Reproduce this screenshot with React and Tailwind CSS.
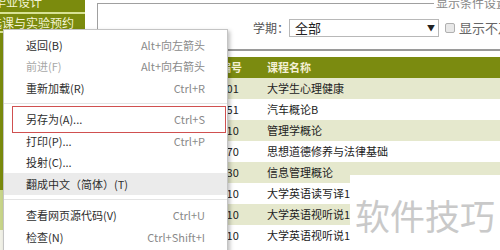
import React from "react";

const rows = [
  ["1", "0810001", "大学生心理健康"],
  ["2", "0820051", "汽车概论B"],
  ["3", "0830010", "管理学概论"],
  ["4", "0840070", "思想道德修养与法律基础"],
  ["5", "0850030", "信息管理概论"],
  ["6", "0860010", "大学英语读写译1"],
  ["7", "0870010", "大学英语视听说1"],
  ["8", "0880010", "大学英语视听说1"],
];

const menuTop = [
  { label: "返回(B)", key: "Alt+向左箭头" },
  { label: "前进(F)", key: "Alt+向右箭头", disabled: true },
  { label: "重新加载(R)", key: "Ctrl+R" },
];

const menuMid = [
  { label: "另存为(A)...", key: "Ctrl+S" },
  { label: "打印(P)...", key: "Ctrl+P" },
  { label: "投射(C)..." },
  { label: "翻成中文（简体）(T)", hover: true },
];

const menuBottom = [
  { label: "查看网页源代码(V)", key: "Ctrl+U" },
  { label: "检查(N)", key: "Ctrl+Shift+I" },
];

function MenuItem({ item }) {
  return (
    <div
      className={`flex items-center justify-between h-[21.5px] pl-[22px] pr-[22px] ${
        item.hover ? "bg-[#ebebeb]" : ""
      }`}
    >
      <span className={item.disabled ? "text-[#a8a8a8]" : "text-[#2e2e2e]"}>{item.label}</span>
      {item.key && <span className="text-[#8a8a8a]">{item.key}</span>}
    </div>
  );
}

export default function App() {
  return (
    <div
      className="relative w-[500px] h-[250px] overflow-hidden bg-white flex text-[11px]"
      style={{ fontFamily: '"Noto Sans CJK SC", "Noto Sans", sans-serif' }}
    >
      {/* Sidebar */}
      <div className="w-[85px] shrink-0 flex flex-col -mt-[8px] text-[12px]">
        <div className="h-[20px] bg-[#7b8b0d] text-[#f4f4d4] flex items-center -ml-[6px] whitespace-nowrap">毕业设计</div>
        <div className="h-[2px] bg-[#d8e294]" />
        <div className="h-[17px] bg-[#7b8b0d] text-[#f4f4d4] flex items-center -ml-[10px] whitespace-nowrap">选课与实验预约</div>
        <div className="h-[2px] bg-[#d8e294]" />
        <div className="h-[157px] bg-[#7b8b0d]" />
        <div className="h-[40px] bg-[#c9d68a]" />
        <div className="flex-1 bg-[#f2f2e8]" />
      </div>

      {/* Main */}
      <div className="flex-1 pl-[12px] flex flex-col">
        <div className="relative mt-[3px] h-[46px] border-l border-t border-[#a0a0a0] -mr-[10px] text-[12px]">
          <span className="absolute -top-[10px] left-[336px] bg-white px-[2px] text-[#888] whitespace-nowrap">显示条件设置</span>
          <div className="flex items-center mt-[14px] ml-[155px] whitespace-nowrap">
            <span className="text-[#555]">学期：</span>
            <div className="w-[150px] h-[18px] border border-[#b8b8b8] flex items-center justify-between pl-[5px] pr-[3px]">
              <span className="text-[13px] text-[#222]">全部</span>
              <span className="text-[8px] text-[#222]">▼</span>
            </div>
            <span className="ml-[6px] w-[10px] h-[10px] border border-[#b0b0b0] bg-[#e8e8e8] rounded-[2px]" />
            <span className="ml-[4px] text-[13px] text-[#666]">显示不及格</span>
          </div>
        </div>
        <div className="h-[2px] bg-[#9a9a9a] -mr-[10px]" />

        <div className="mt-[6px] -mr-[10px]">
          <div className="flex h-[21px] bg-[#7b8b10] text-[#f4f0d4] font-bold items-center">
            <div className="w-[93px] pl-[8px]">序号</div>
            <div className="w-[67px] pl-[8px] whitespace-nowrap">课程编号</div>
            <div className="flex-1 pl-[10px]">课程名称</div>
          </div>
          {rows.map((r, i) => (
            <div
              key={i}
              className={`flex h-[21px] items-center text-[#222] ${i % 2 === 0 ? "bg-[#e5e8cd]" : "bg-white"}`}
            >
              <div className="w-[93px] pl-[8px]">{r[0]}</div>
              <div className="w-[67px] pl-[6px] whitespace-nowrap">{r[1]}</div>
              <div className="flex-1 pl-[10px] whitespace-nowrap">{r[2]}</div>
            </div>
          ))}
        </div>
      </div>

      {/* Watermark */}
      <div className="absolute left-[350px] top-[175px] w-[150px] h-[75px] bg-white flex items-center justify-center">
        <span className="text-[35px] text-[#c9c9c9] leading-none mt-[4px]">软件技巧</span>
      </div>

      {/* Context menu */}
      <div className="absolute left-[3px] top-[29px] w-[225px] bg-white border border-[#c4c4c4] shadow-[2px_2px_4px_rgba(0,0,0,0.25)] py-[4px]">
        {menuTop.map((m) => (
          <MenuItem key={m.label} item={m} />
        ))}
        <div className="h-[10px] flex items-center">
          <div className="h-px w-full bg-[#e4e4e4]" />
        </div>
        {menuMid.map((m) => (
          <MenuItem key={m.label} item={m} />
        ))}
        <div className="h-[10px] flex items-center">
          <div className="h-px w-full bg-[#e4e4e4]" />
        </div>
        {menuBottom.map((m) => (
          <MenuItem key={m.label} item={m} />
        ))}
      </div>

      {/* Highlight box */}
      <div className="absolute left-[12px] top-[106px] w-[214px] h-[27px] border border-[#d05050]" />
    </div>
  );
}
